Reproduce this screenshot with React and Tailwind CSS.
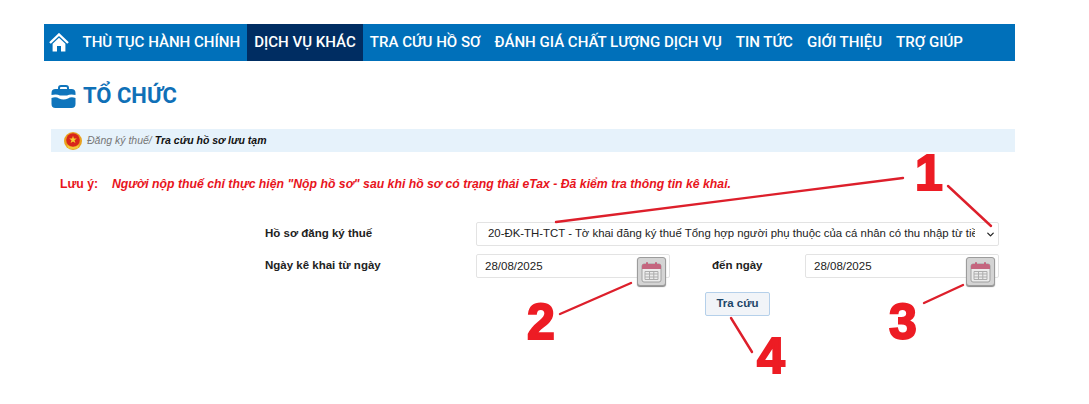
import { useState } from "react";
import { ChevronDown } from "lucide-react";

const navItems = [
  { label: "THÙ TỤC HÀNH CHÍNH" },
  { label: "DỊCH VỤ KHÁC", active: true },
  { label: "TRA CỨU HỒ SƠ" },
  { label: "ĐÁNH GIÁ CHẤT LƯỢNG DỊCH VỤ" },
  { label: "TIN TỨC" },
  { label: "GIỚI THIỆU" },
  { label: "TRỢ GIÚP" },
];

function HomeIcon() {
  return (
    <svg width="20" height="19" viewBox="0 0 20 19" fill="none">
      <path d="M1 10 L10 1.5 L19 10" stroke="#fff" strokeWidth="2.4" strokeLinejoin="miter" />
      <path d="M3.6 10.8 L10 4.8 L16.4 10.8 V18.5 H12 V13 H8 V18.5 H3.6 Z" fill="#fff" />
    </svg>
  );
}

function BriefcaseIcon() {
  return (
    <svg width="25" height="23" viewBox="0 0 25 23" fill="none">
      <path d="M8 5 V3 Q8 1 10 1 H15 Q17 1 17 3 V5" stroke="#0f75bc" strokeWidth="2" />
      <path d="M0.5 8 Q0.5 4 4.5 4 H20.5 Q24.5 4 24.5 8 V10 Q19 9 16 10.5 H9 Q6 9 0.5 10 Z" fill="#0f75bc" />
      <path d="M0.5 13 Q5 11.5 8 13.5 Q12.5 15.5 17 13.5 Q20 11.5 24.5 13 V19 Q24.5 23 20.5 23 H4.5 Q0.5 23 0.5 19 Z" fill="#0f75bc" />
    </svg>
  );
}

function Emblem() {
  return (
    <svg width="18" height="18" viewBox="0 0 18 18">
      <circle cx="9" cy="9" r="9" fill="#e9a21f" />
      <circle cx="9" cy="8" r="6.8" fill="#d8261c" />
      <path d="M9 3.8 L9.9 6.6 H12.8 L10.5 8.3 L11.4 11 L9 9.4 L6.6 11 L7.5 8.3 L5.2 6.6 H8.1 Z" fill="#f6d02f" />
      <path d="M3 13 Q9 17 15 13 L14 16 Q9 18 4 16 Z" fill="#f3c83a" />
    </svg>
  );
}

function CalendarButton() {
  return (
    <button
      type="button"
      className="absolute right-[4px] top-[3px] flex h-[29px] w-[29px] items-center justify-center rounded-[3px] border border-[#9c9c9c] bg-[#d4d4d4] shadow-[0_1px_1px_#888]"
    >
      <svg width="21" height="22" viewBox="0 0 21 22">
        <rect x="1" y="3" width="19" height="18" rx="2" fill="#ececec" stroke="#a0a0a0" />
        <path d="M1 5 Q1 3 3 3 H18 Q20 3 20 5 V8 H1 Z" fill="#c4667f" />
        <rect x="5" y="1" width="2" height="4" rx="1" fill="#c4667f" />
        <rect x="14" y="1" width="2" height="4" rx="1" fill="#c4667f" />
        <path d="M4 10.5 H17 V18.5 H4 Z M4 13 H17 M4 16 H17 M8.5 10.5 V18.5 M12.8 10.5 V18.5" fill="none" stroke="#adadad" />
      </svg>
    </button>
  );
}

function DateField({ value, onChange }) {
  return (
    <div className="relative w-[194px]">
      <input
        value={value}
        onChange={(e) => onChange(e.target.value)}
        className="h-[24px] w-full rounded-[2px] border border-[#e3e3e3] bg-white pl-[8px] text-[11.5px] text-[#222] outline-none"
      />
      <CalendarButton />
    </div>
  );
}

function Annotations() {
  const num = "absolute font-bold leading-none text-[#ed1c24] text-[50px] [-webkit-text-stroke:2px_#ed1c24]";
  return (
    <>
      <svg className="pointer-events-none absolute left-0 top-0" width="1089" height="404">
        <g stroke="#dd1f2b" strokeWidth="2.4" strokeLinecap="round">
          <line x1="556" y1="222" x2="903" y2="178" />
          <line x1="948" y1="186" x2="991" y2="226" />
          <line x1="560" y1="314" x2="631" y2="283" />
          <line x1="924" y1="303" x2="963" y2="285" />
          <line x1="731" y1="318" x2="752" y2="352" />
        </g>
      </svg>
      <span className={`${num} left-[915px] top-[148px]`}>1</span>
      <span className={`${num} left-[527px] top-[297px]`}>2</span>
      <span className={`${num} left-[889px] top-[297px]`}>3</span>
      <span className={`${num} left-[757px] top-[331px]`}>4</span>
    </>
  );
}

export default function App() {
  const [fromDate, setFromDate] = useState("28/08/2025");
  const [toDate, setToDate] = useState("28/08/2025");

  return (
    <div className="relative h-[404px] w-[1089px] overflow-hidden bg-white font-['Liberation_Sans',sans-serif]">
      <div className="ml-[44px] w-[971px] pt-[24px]">
        <nav className="flex h-[37px] items-stretch bg-[#0070ba] font-['Roboto',sans-serif] text-[15.05px] font-medium text-white">
          <a className="flex items-center pl-[5px] pr-[6.5px]">
            <HomeIcon />
          </a>
          {navItems.map((item) => (
            <a
              key={item.label}
              className={`flex items-center whitespace-nowrap px-[7px] ${item.active ? "bg-[#002d62]" : ""}`}
            >
              {item.label}
            </a>
          ))}
        </nav>

        <div className="ml-[7px] mt-[21px] flex items-center gap-[7px]">
          <BriefcaseIcon />
          <h1 className="font-['Roboto',sans-serif] text-[22px] font-bold leading-[28px] text-[#0f70b7]">TỔ CHỨC</h1>
        </div>

        <div className="ml-[7px] mt-[19px] flex h-[23px] items-center bg-[#e6f2fb] pl-[13px] text-[10.5px] italic">
          <Emblem />
          <span className="ml-[5px] text-[#777]">Đăng ký thuế/</span>
          <span className="ml-[3px] font-bold text-[#111]">Tra cứu hồ sơ lưu tạm</span>
        </div>

        <div className="ml-[16px] mt-[24px] flex text-[12.25px] font-bold leading-[16px] text-[#e8141c]">
          <span className="w-[52px]">Lưu ý:</span>
          <span className="italic">Người nộp thuế chỉ thực hiện "Nộp hồ sơ" sau khi hồ sơ có trạng thái eTax - Đã kiểm tra thông tin kê khai.</span>
        </div>

        <form className="ml-[221px] mt-[30px] text-[11.5px] text-[#222]">
          <div className="flex items-center">
            <label className="w-[211px] font-bold">Hồ sơ đăng ký thuế</label>
            <div className="relative w-[523px]">
              <select className="h-[24px] w-full appearance-none rounded-[2px] border border-[#e3e3e3] bg-white pl-[11px] pr-[23px] text-[11.4px] outline-none">
                <option>20-ĐK-TH-TCT - Tờ khai đăng ký thuế Tổng hợp người phụ thuộc của cá nhân có thu nhập từ tiền lương, tiền công</option>
              </select>
              <ChevronDown size={11} strokeWidth={2.75} className="pointer-events-none absolute right-[3px] top-[7px] text-[#222]" />
            </div>
          </div>
          <div className="mt-[8px] flex items-center">
            <label className="w-[211px] font-bold">Ngày kê khai từ ngày</label>
            <DateField value={fromDate} onChange={setFromDate} />
            <label className="ml-[42px] w-[93px] font-bold">đến ngày</label>
            <DateField value={toDate} onChange={setToDate} />
          </div>
          <div className="ml-[440px] mt-[14px]">
            <button
              type="button"
              className="h-[24px] w-[65px] rounded-[2px] border border-[#b5d0ea] bg-[#f1f4f8] text-[11.5px] font-bold text-[#1d4568]"
            >
              Tra cứu
            </button>
          </div>
        </form>
      </div>
      <Annotations />
    </div>
  );
}
